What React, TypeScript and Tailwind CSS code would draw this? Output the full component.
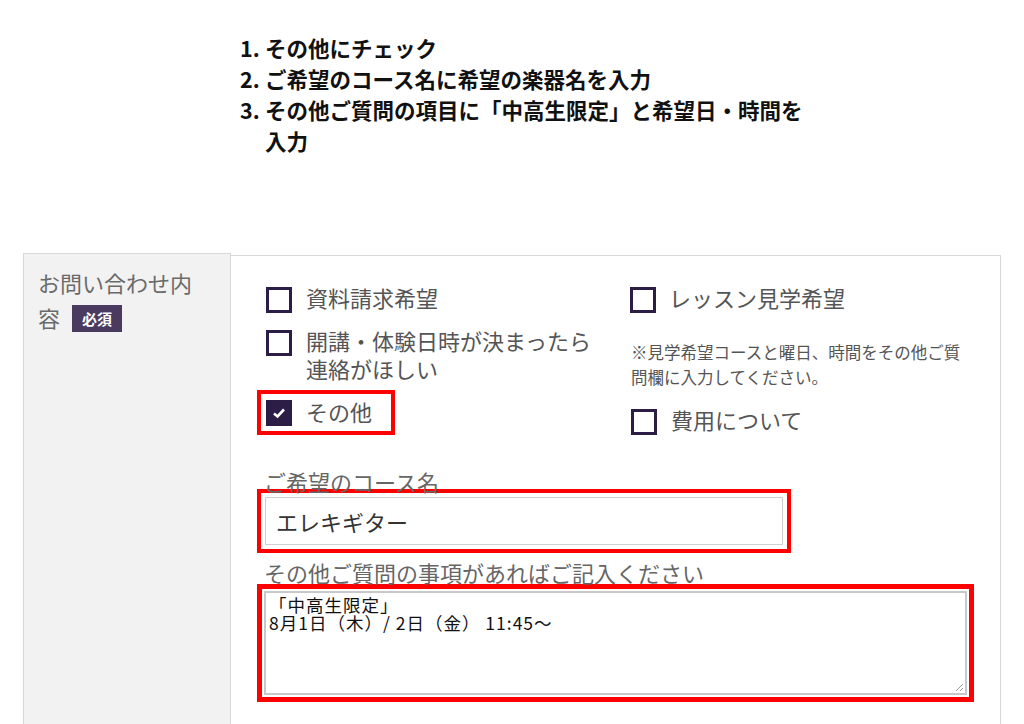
import { ReactNode } from "react";

const jp = { fontFamily: '"Noto Sans CJK JP", "Noto Sans", sans-serif' };

function Box({ checked }: { checked?: boolean }) {
  if (checked) {
    return (
      <div className="w-[26px] h-[26px] shrink-0 bg-[#2b1d45] flex items-center justify-center">
        <svg width="14" height="12" viewBox="0 0 14 12">
          <path d="M2 6.5 L5.5 9.5 L12 2.5" stroke="#fff" strokeWidth="2.6" fill="none" />
        </svg>
      </div>
    );
  }
  return <div className="w-[26px] h-[26px] shrink-0 border-[3px] border-[#2b1d45] bg-white"></div>;
}

function Check({ checked, children }: { checked?: boolean; children: ReactNode }) {
  return (
    <div className="flex flex-row items-start">
      <div className="pt-[1px]">
        <Box checked={checked} />
      </div>
      <div className="ml-[14px] -mt-[3px] text-[22px] leading-[28px] text-[#555]">{children}</div>
    </div>
  );
}

export default function App() {
  return (
    <div className="w-[1024px] h-[724px] overflow-hidden bg-white" style={jp}>
      <ol className="pl-[240px] pt-[32px] text-[21.5px] leading-[31px] font-bold text-[#111]">
        <li className="flex flex-row">
          <span className="w-[25px]">1.</span>
          <span>その他にチェック</span>
        </li>
        <li className="flex flex-row">
          <span className="w-[25px]">2.</span>
          <span>ご希望のコース名に希望の楽器名を入力</span>
        </li>
        <li className="flex flex-row">
          <span className="w-[25px] shrink-0">3.</span>
          <span className="w-[545px]">その他ご質問の項目に「中高生限定」と希望日・時間を入力</span>
        </li>
      </ol>

      <div className="flex flex-row ml-[23px] mt-[97px] w-[978px] h-[480px]">
        <div className="w-[208px] shrink-0 bg-[#f2f2f2] border-l border-t border-r border-[#d8d8d8] pl-[14px] pt-[11px]">
          <div className="w-[160px] text-[22px] leading-[35px] text-[#6a6a6a]">
            お問い合わせ内容
            <span className="inline-block ml-[12px] align-[2px] bg-[#4b3a60] text-white text-[15px] leading-[27px] px-[10px] font-bold">
              必須
            </span>
          </div>
        </div>

        <div className="flex-1 border-t border-r border-[#d8d8d8] mt-[2px] pl-[35px] pt-[30px]">
          <div className="flex flex-row">
            <div className="w-[365px] flex flex-col">
              <Check>資料請求希望</Check>
              <div className="mt-[16px]">
                <Check>
                  開講・体験日時が決まったら
                  <br />
                  連絡がほしい
                </Check>
              </div>
              <div className="mt-[8px] -ml-[9px] w-[138px] h-[45px] border-4 border-[#ff0000] flex flex-row items-center pl-[5px]">
                <Box checked />
                <span className="ml-[14px] -mt-[3px] text-[22px] leading-[28px] text-[#555]">その他</span>
              </div>
            </div>
            <div className="flex flex-col">
              <div className="-ml-[1px]">
                <Check>
                  <span className="ml-[-1px]">レッスン見学希望</span>
                </Check>
              </div>
              <div className="mt-[27px] text-[16.5px] leading-[25px] text-[#555]">
                ※見学希望コースと曜日、時間をその他ご質
                <br />
                問欄に入力してください。
              </div>
              <div className="mt-[18px]">
                <Check>費用について</Check>
              </div>
            </div>
          </div>

          <div className="mt-[38px] -ml-[2px] text-[22px] leading-[16px] text-[#666]">ご希望のコース名</div>
          <div className="-ml-[9px] w-[534px] h-[64px] border-4 border-[#ff0000] p-[4px] bg-white">
            <div className="h-full border border-[#cfcfcf] flex items-center pl-[10px] text-[22px] text-[#333]">
              エレキギター
            </div>
          </div>

          <div className="mt-[7px] -ml-[2px] text-[22px] leading-[24px] text-[#666]">
            その他ご質問の事項があればご記入ください
          </div>
          <div className="-ml-[9px] w-[717px] h-[118px] border-[5px] border-[#ff0000] p-[2px] bg-white">
            <div className="relative h-full border-2 border-[#c8c8c8] px-[3px] pt-[3px] text-[17.5px] leading-[18px] tracking-[1px] text-[#111]">
              「中高生限定」
              <br />
              8月1日（木）/ 2日（金） 11:45～
              <svg className="absolute right-[1px] bottom-[1px]" width="10" height="10" viewBox="0 0 10 10">
                <path d="M9 2 L2 9 M9 6 L6 9" stroke="#999" strokeWidth="1" />
              </svg>
            </div>
          </div>
        </div>
      </div>
    </div>
  );
}
